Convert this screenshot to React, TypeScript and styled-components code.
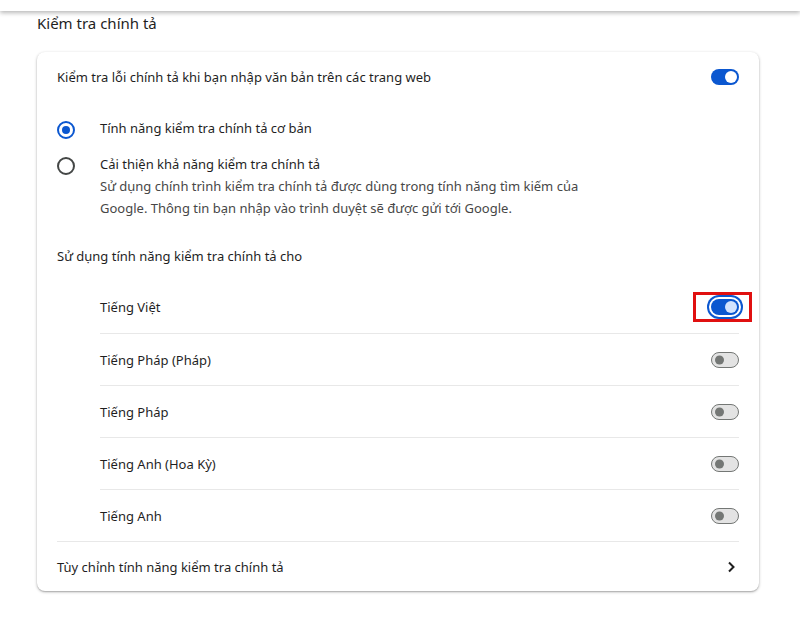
import React, { FC } from 'react';
import styled, { createGlobalStyle } from 'styled-components';

const GlobalStyle = createGlobalStyle`
  html, body {
    margin: 0;
    padding: 0;
    background: #ffffff;
    font-family: "Noto Sans", "Open Sans", sans-serif;
    color: #1f1f1f;
  }
`;

const Page = styled.div`
  width: 800px;
  height: 617px;
  overflow: hidden;
  background: #ffffff;
`;

const TopBar = styled.div`
  height: 11px;
  background: #ffffff;
  box-shadow: 0 2px 4px rgba(0, 0, 0, 0.28);
  position: relative;
`;

const Content = styled.div`
  padding: 0 41px 0 37px;
`;

const SectionTitle = styled.div`
  font-size: 15px;
  line-height: 20px;
  padding: 2px 0 19px;
  color: #1f1f1f;
`;

const Card = styled.div`
  border-radius: 8px;
  background: #ffffff;
  box-shadow: 0 1px 3px rgba(0, 0, 0, 0.3), 0 1px 1px rgba(0, 0, 0, 0.12);
`;

const Row = styled.div<{ $indent?: boolean; $divider?: boolean; $height?: number }>`
  box-sizing: border-box;
  display: flex;
  align-items: center;
  justify-content: space-between;
  min-height: ${(p) => p.$height ?? 52}px;
  margin-left: ${(p) => (p.$indent ? 63 : 20)}px;
  margin-right: 20px;
  border-top: ${(p) => (p.$divider ? '1px solid #e8e8e8' : 'none')};
  font-size: 13px;
  line-height: 20px;
`;

const RadioGroup = styled.div`
  display: flex;
  flex-direction: column;
  gap: 17px;
  padding: 18px 20px 17px 20px;
`;

const RadioRow = styled.div`
  display: flex;
  align-items: flex-start;
`;

const RadioCircle = styled.span<{ $checked?: boolean }>`
  flex: none;
  width: 14px;
  height: 14px;
  border-radius: 50%;
  border: 2px solid ${(p) => (p.$checked ? '#0b57d0' : '#444746')};
  margin: 1px 25px 0 0;
  display: flex;
  align-items: center;
  justify-content: center;
  &::after {
    content: '';
    display: ${(p) => (p.$checked ? 'block' : 'none')};
    width: 8px;
    height: 8px;
    border-radius: 50%;
    background: #0b57d0;
  }
`;

const RadioText = styled.div`
  font-size: 13px;
  line-height: 22px;
  margin-top: -3px;
`;

const Secondary = styled.div`
  color: #474747;
  font-size: 13px;
  line-height: 22px;
`;

const SubHeading = styled.div`
  font-size: 13px;
  line-height: 20px;
  padding: 10px 20px 15px;
`;

const Highlight = styled.span`
  position: relative;
  display: inline-flex;
  &::before {
    content: '';
    position: absolute;
    left: -18px;
    top: -7px;
    width: 53px;
    height: 24px;
    border: 3px solid #e01010;
  }
`;

const Track = styled.span<{ $on?: boolean; $focus?: boolean }>`
  position: relative;
  display: inline-block;
  box-sizing: border-box;
  width: 28px;
  height: 16px;
  border-radius: 8px;
  background: ${(p) => (p.$on ? '#0b57d0' : '#e3e3e3')};
  border: ${(p) => (p.$on ? 'none' : '1.5px solid #747775')};
  box-shadow: ${(p) => (p.$focus ? '0 0 0 2px #ffffff, 0 0 0 4px #0b57d0' : 'none')};
`;

const Knob = styled.span<{ $on?: boolean; $focus?: boolean }>`
  position: absolute;
  top: 50%;
  transform: translateY(-50%);
  border-radius: 50%;
  width: ${(p) => (p.$on ? 12 : 9)}px;
  height: ${(p) => (p.$on ? 12 : 9)}px;
  background: ${(p) => (p.$on ? (p.$focus ? '#d3e3fd' : '#ffffff') : '#747775')};
  ${(p) => (p.$on ? 'right: 2px;' : 'left: 2.5px;')}
`;

const Toggle: FC<{ on?: boolean; focus?: boolean }> = ({ on, focus }) => (
  <Track $on={on} $focus={focus}>
    <Knob $on={on} $focus={focus} />
  </Track>
);

const Chevron = () => (
  <svg width="20" height="20" viewBox="0 0 20 20" style={{ marginRight: -2 }}>
    <path d="M8 5.5 L12.5 10 L8 14.5" fill="none" stroke="#1f1f1f" strokeWidth="2" />
  </svg>
);

const languages = ['Tiếng Pháp (Pháp)', 'Tiếng Pháp', 'Tiếng Anh (Hoa Kỳ)', 'Tiếng Anh'];

const App: FC = () => (
  <Page>
    <GlobalStyle />
    <TopBar />
    <Content>
      <SectionTitle>Kiểm tra chính tả</SectionTitle>
      <Card>
        <Row $height={50}>
          <span>Kiểm tra lỗi chính tả khi bạn nhập văn bản trên các trang web</span>
          <Toggle on />
        </Row>
        <RadioGroup>
          <RadioRow>
            <RadioCircle $checked />
            <RadioText>Tính năng kiểm tra chính tả cơ bản</RadioText>
          </RadioRow>
          <RadioRow>
            <RadioCircle />
            <RadioText>
              Cải thiện khả năng kiểm tra chính tả
              <Secondary>
                Sử dụng chính trình kiểm tra chính tả được dùng trong tính năng tìm kiếm của
                <br />
                Google. Thông tin bạn nhập vào trình duyệt sẽ được gửi tới Google.
              </Secondary>
            </RadioText>
          </RadioRow>
        </RadioGroup>
        <SubHeading>Sử dụng tính năng kiểm tra chính tả cho</SubHeading>
        <Row $indent>
          <span>Tiếng Việt</span>
          <Highlight>
            <Toggle on focus />
          </Highlight>
        </Row>
        {languages.map((l) => (
          <Row key={l} $indent $divider>
            <span>{l}</span>
            <Toggle />
          </Row>
        ))}
        <Row $divider $height={50}>
          <span>Tùy chỉnh tính năng kiểm tra chính tả</span>
          <Chevron />
        </Row>
      </Card>
    </Content>
  </Page>
);

export default App;
